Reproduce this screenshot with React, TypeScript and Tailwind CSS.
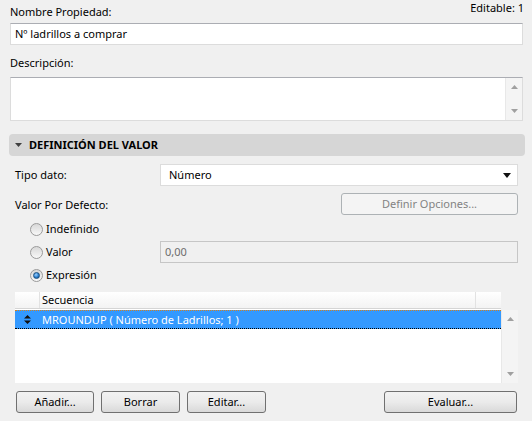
import { ReactNode } from "react";

const font = "font-['Noto_Sans','Open_Sans',sans-serif]";

function Radio({ checked, label }: { checked?: boolean; label: string }) {
  return (
    <div className="flex items-center gap-[3px]">
      <span className="relative flex h-[13px] w-[13px] items-center justify-center rounded-full border border-[#9a9a9a] bg-gradient-to-b from-[#d8d8d8] to-[#f8f8f8]">
        {checked && (
          <span className="h-[7px] w-[7px] rounded-full border border-[#1d5281] bg-[radial-gradient(circle_at_40%_35%,#9fd3ff,#2a7fd0_55%,#10416f)]" />
        )}
      </span>
      <span>{label}</span>
    </div>
  );
}

function Btn({ children, className = "", disabled }: { children: ReactNode; className?: string; disabled?: boolean }) {
  return (
    <div
      className={
        "flex h-[22px] items-center justify-center rounded-[3px] border " +
        (disabled
          ? "border-[#adb2b5] bg-[#f4f4f4] text-[#838383] "
          : "border-[#707070] bg-gradient-to-b from-[#f2f2f2] via-[#ebebeb] to-[#d9d9d9] text-black ") +
        className
      }
    >
      {children}
    </div>
  );
}

function ScrollArrows() {
  return (
    <div className="flex h-full w-[17px] flex-col items-center justify-between border-l border-[#e8e8e8] bg-[#f4f4f4] py-[7px]">
      <svg width="7" height="4" viewBox="0 0 7 4">
        <path d="M0 4 L3.5 0 L7 4 Z" fill="#a0a0a0" />
      </svg>
      <svg width="7" height="4" viewBox="0 0 7 4">
        <path d="M0 0 L3.5 4 L7 0 Z" fill="#a0a0a0" />
      </svg>
    </div>
  );
}

export default function App() {
  return (
    <div className={"h-[421px] w-[532px] overflow-hidden bg-[#f0f0f0] text-[11px] leading-[16px] text-black " + font}>
      <div className="pl-[10px] pr-[9px]">
        <div className="flex items-start justify-between pt-[4px]">
          <span>Nombre Propiedad:</span>
          <span className="-mt-[4px] mr-[-1px]">Editable: 1</span>
        </div>
        <div className="mt-[3px] flex h-[22px] items-center border border-[#dcdcdc] border-t-[#abadb3] bg-white pl-[4px]">
          Nº ladrillos a comprar
        </div>
        <div className="mt-[10px]">Descripción:</div>
        <div className="mt-[6px] flex h-[44px] justify-end border border-[#dcdcdc] border-t-[#abadb3] bg-white">
          <ScrollArrows />
        </div>
      </div>

      <div className="ml-[9px] mr-[7px] mt-[13px] flex h-[22px] items-center rounded-[4px] bg-[#d6d6d6] pl-[6px]">
        <svg width="7" height="4" viewBox="0 0 7 4" className="mr-[7px]">
          <path d="M0 0 L3.5 4 L7 0 Z" fill="#404040" />
        </svg>
        <span className="font-bold">DEFINICIÓN DEL VALOR</span>
      </div>

      <div className="pl-[15px] pr-[14px]">
        <div className="mt-[8px] flex h-[22px] items-center">
          <span className="w-[145px]">Tipo dato:</span>
          <div className="flex h-[22px] flex-1 items-center justify-between border border-[#dcdcdc] bg-white pl-[8px] pr-[6px]">
            <span>Número</span>
            <svg width="8" height="5" viewBox="0 0 8 5">
              <path d="M0 0 L4 5 L8 0 Z" fill="#111" />
            </svg>
          </div>
        </div>

        <div className="mt-[7px] flex h-[21px] items-center justify-between">
          <span className="mt-[2px]">Valor Por Defecto:</span>
          <Btn disabled className="h-[21px] w-[177px]">Definir Opciones...</Btn>
        </div>

        <div className="mt-[7px] pl-[15px]">
          <Radio label="Indefinido" />
        </div>
        <div className="mt-[4px] flex h-[22px] items-center">
          <div className="w-[145px] pl-[15px]">
            <Radio label="Valor" />
          </div>
          <div className="flex h-[22px] flex-1 items-center border border-[#c6c6c6] bg-[#f0f0f0] pl-[4px] text-[#6d6d6d]">
            0,00
          </div>
        </div>
        <div className="mt-[4px] pl-[15px]">
          <Radio checked label="Expresión" />
        </div>

        <div className="mt-[9px] flex h-[91px]">
          <div className="flex flex-1 flex-col bg-white">
            <div className="flex h-[17px] border-b border-[#d5d5d5] bg-gradient-to-b from-white to-[#f3f3f3]">
              <div className="w-[25px] border-r border-[#e2e2e2]" />
              <div className="flex-1 border-r border-[#e2e2e2] pl-[2px] leading-[16px]">Secuencia</div>
              <div className="w-[25px]" />
            </div>
            <div className="mt-[1px] flex h-[19px] items-center border-t border-dotted border-t-[#d08020] border-b border-b-black bg-[#3399ff] text-white">
              <svg width="7" height="9" viewBox="0 0 7 9" className="ml-[9px] mr-[11px]">
                <path d="M0 3.5 L3.5 0 L7 3.5 Z M0 5.5 L3.5 9 L7 5.5 Z" fill="#111" />
              </svg>
              <span>MROUNDUP ( Número de Ladrillos; 1 )</span>
            </div>
          </div>
          <div className="flex flex-col">
            <div className="h-[18px] w-[16px] bg-[#f0f0f0]" />
            <div className="flex-1">
              <ScrollArrows />
            </div>
          </div>
        </div>
      </div>

      <div className="ml-[16px] mr-[15px] mt-[8px] flex items-center">
        <Btn className="w-[78px]">Añadir...</Btn>
        <Btn className="ml-[7px] w-[79px]">Borrar</Btn>
        <Btn className="ml-[7px] w-[79px]">Editar...</Btn>
        <Btn className="ml-auto w-[133px]">Evaluar...</Btn>
      </div>
    </div>
  );
}
